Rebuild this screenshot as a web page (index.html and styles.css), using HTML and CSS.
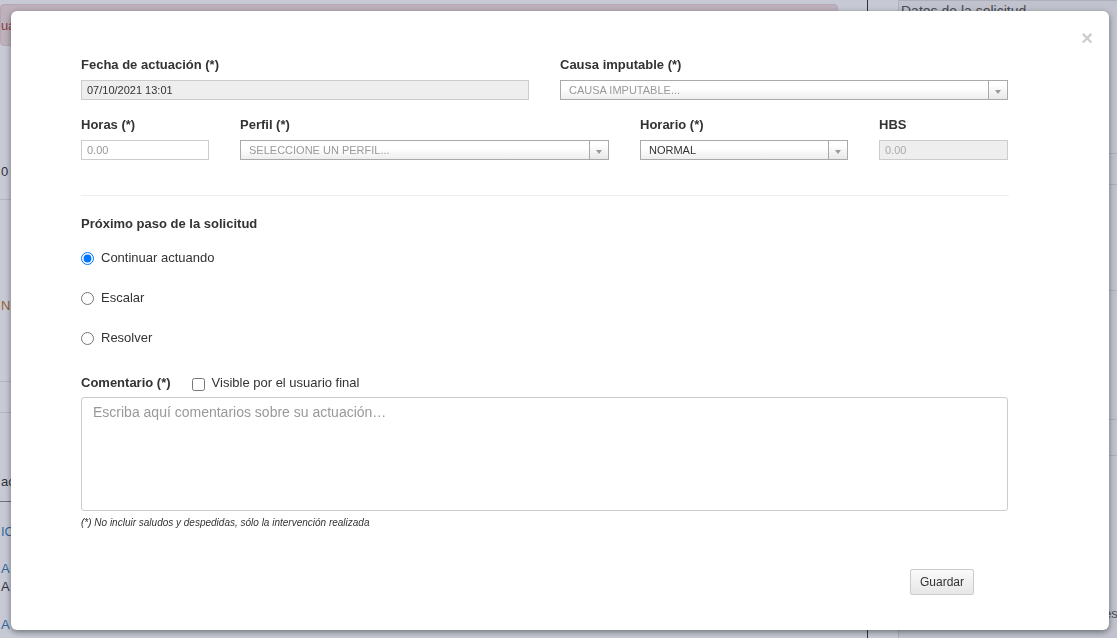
FILE: index.html
```html
<!DOCTYPE html>
<html lang="es">
<head>
  <meta charset="UTF-8" />
  <title>Nueva actuación</title>
  <link rel="stylesheet" href="styles.css">
</head>
<body>

  <div class="page">
    <div class="main">
      <div class="alert">ua</div>
      <div class="bg-row h1">0</div>
      <div class="bg-row h2 warn">N E</div>
      <div class="bg-row h3"></div>
      <div class="bg-row h4 dark">ac</div>
      <div class="bg-row h5 link">IC</div>
      <div class="bg-row h6"><span class="link">A</span><br>A</div>
      <div class="bg-row h7 link">A</div>
    </div>
    <div class="side">
      <div class="side-panel">
        <div class="side-title">Datos de la solicitud</div>
        <div class="side-row r1"></div>
        <div class="side-row r2"></div>
        <div class="side-row r3"></div>
        <div class="side-row r4"></div>
        <div class="side-row r5"></div>
        <div class="side-last">es</div>
      </div>
    </div>
  </div>

  <div class="overlay"></div>

  <div class="modal">
    <span class="close">&times;</span>

    <div class="modal-body">
      <div class="row two">
        <div class="field">
          <label>Fecha de actuación (*)</label>
          <div class="input disabled">07/10/2021 13:01</div>
        </div>
        <div class="field">
          <label>Causa imputable (*)</label>
          <div class="select placeholder"><span>CAUSA IMPUTABLE...</span><b class="arrow"></b></div>
        </div>
      </div>

      <div class="row four">
        <div class="field">
          <label>Horas (*)</label>
          <div class="input placeholder">0.00</div>
        </div>
        <div class="field">
          <label>Perfil (*)</label>
          <div class="select placeholder"><span>SELECCIONE UN PERFIL...</span><b class="arrow"></b></div>
        </div>
        <div class="field">
          <label>Horario (*)</label>
          <div class="select"><span>NORMAL</span><b class="arrow"></b></div>
        </div>
        <div class="field">
          <label>HBS</label>
          <div class="input disabled placeholder">0.00</div>
        </div>
      </div>

      <hr class="sep">

      <h3 class="section">Próximo paso de la solicitud</h3>
      <div class="radios">
        <label class="radio"><input type="radio" name="paso" checked> Continuar actuando</label>
        <label class="radio"><input type="radio" name="paso"> Escalar</label>
        <label class="radio"><input type="radio" name="paso"> Resolver</label>
      </div>

      <div class="comment-head">
        <span class="section">Comentario (*)</span>
        <label class="check"><input type="checkbox"> Visible por el usuario final</label>
      </div>
      <textarea class="comment" placeholder="Escriba aquí comentarios sobre su actuación…"></textarea>
      <p class="note">(*) No incluir saludos y despedidas, sólo la intervención realizada</p>

      <div class="actions">
        <button class="btn">Guardar</button>
      </div>
    </div>
  </div>

</body>
</html>
```

FILE: styles.css
```css
body {
  margin: 0;
  font-family: 'Liberation Sans', Arial, sans-serif;
  color: #333;
  background: #fff;
  overflow: hidden;
}

/* page behind the dialog */
.page {
  display: flex;
  height: 638px;
  overflow: hidden;
}
.main {
  flex: none;
  width: 838px;
  padding-top: 4px;
  font-size: 13px;
}
.alert {
  height: 42px;
  line-height: 42px;
  background: #f2dede;
  border: 1px solid #ebccd1;
  border-radius: 4px;
  color: #a94442;
  box-sizing: border-box;
}
.bg-row {
  box-sizing: border-box;
  padding-left: 1px;
  border-bottom: 1px solid #e4e4e4;
}
.h1 { height: 154px; padding-top: 118px; }
.h2 { height: 182px; padding-top: 98px; }
.h3 { height: 31px; }
.h4 { height: 89px; padding-top: 61px; border-color: #888; }
.h5 { height: 40px; padding-top: 22px; border: 0; }
.h6 { height: 58px; padding-top: 18px; border: 0; line-height: 18px; }
.h7 { border: 0; padding-top: 17px; }
.warn { color: #c0732b; }
.link { color: #337ab7; }

.side {
  flex: 1;
  margin-left: 29px;
  padding-left: 30px;
  border-left: 1px solid #333;
}
.side-panel {
  height: 100%;
  background: #f6f6f6;
  border: 1px solid #ddd;
  border-right: 0;
}
.side-title {
  padding: 2px;
  font-size: 14px;
  color: #555;
  height: 30px;
}
.side-row {
  border-bottom: 1px solid #ddd;
}
.r1 { height: 118px; }
.r2 { height: 30px; }
.r3 { height: 105px; }
.r4 { height: 128px; }
.r5 { height: 35px; }
.side-last {
  padding: 150px 0 0 205px;
  font-size: 13px;
  color: #555;
}

.overlay {
  position: fixed;
  inset: 0;
  background: rgba(40, 50, 90, 0.26);
}

/* dialog */
.modal {
  position: fixed;
  top: 11px;
  left: 11px;
  width: 1098px;
  height: 619px;
  background: #fff;
  border-radius: 6px;
  box-shadow: 0 2px 6px rgba(0, 0, 0, 0.45);
}
.close {
  position: absolute;
  top: 17px;
  right: 16px;
  font-size: 20px;
  font-weight: bold;
  line-height: 20px;
  color: #cdcdcd;
}
.modal-body {
  padding: 46px 100px 0 70px;
}

.row {
  display: grid;
  column-gap: 31px;
}
.row.two { grid-template-columns: 448px 448px; }
.row.four {
  grid-template-columns: 128px 369px 208px 129px;
  margin-top: 17px;
}
.field label,
.section {
  display: block;
  font-size: 13px;
  font-weight: bold;
  line-height: 16px;
  color: #333;
  margin: 0 0 7px;
}
.input,
.select {
  box-sizing: border-box;
  height: 20px;
  border: 1px solid #ccc;
  font-size: 11px;
  line-height: 18px;
  padding: 0 5px;
  color: #333;
}
.input.disabled {
  background: #eee;
}
.placeholder { color: #999; }
.input.disabled.placeholder { color: #aaa; }

.select {
  display: flex;
  justify-content: space-between;
  border-color: #aaa;
  padding: 0 0 0 8px;
  background: linear-gradient(#fff 40%, #eee);
}
.select .arrow {
  width: 18px;
  border-left: 1px solid #aaa;
  position: relative;
  background: linear-gradient(#fff 20%, #e8e8e8);
}
.select .arrow::after {
  content: "";
  position: absolute;
  left: 6px;
  top: 9px;
  border: 3px solid transparent;
  border-top: 4px solid #999;
  border-bottom: 0;
}

.sep {
  border: 0;
  border-top: 1px solid #eee;
  margin: 35px 0 20px;
}

.radios {
  display: flex;
  flex-direction: column;
  gap: 20px;
  margin-top: 16px;
}
.radio,
.check {
  font-size: 13px;
  line-height: 20px;
  color: #333;
  display: flex;
  align-items: center;
}
.radio input {
  margin: 1px 7px 0 0;
  width: 13px;
  height: 13px;
}

.comment-head {
  display: flex;
  align-items: center;
  margin-top: 27px;
  height: 16px;
}
.comment-head .section { margin: 0 21px 0 0; }
.check input {
  margin: 2px 7px 0 0;
  width: 13px;
  height: 13px;
}

.comment {
  display: block;
  box-sizing: border-box;
  width: 927px;
  height: 114px;
  margin-top: 6px;
  border: 1px solid #ccc;
  border-radius: 3px;
  padding: 6px 11px;
  font-family: 'Liberation Sans', Arial, sans-serif;
  font-size: 14px;
  resize: none;
}
.comment::placeholder { color: #999; }

.note {
  margin: 5px 0 0;
  font-size: 10px;
  font-style: italic;
  line-height: 13px;
  color: #333;
}

.actions {
  display: flex;
  justify-content: flex-end;
  padding-right: 35px;
  margin-top: 40px;
}
.btn {
  width: 64px;
  height: 26px;
  border: 1px solid #ccc;
  border-radius: 2px;
  background: linear-gradient(#fafafa, #e6e6e6);
  font-family: 'Liberation Sans', Arial, sans-serif;
  font-size: 12px;
  color: #333;
  padding: 0;
}
```
